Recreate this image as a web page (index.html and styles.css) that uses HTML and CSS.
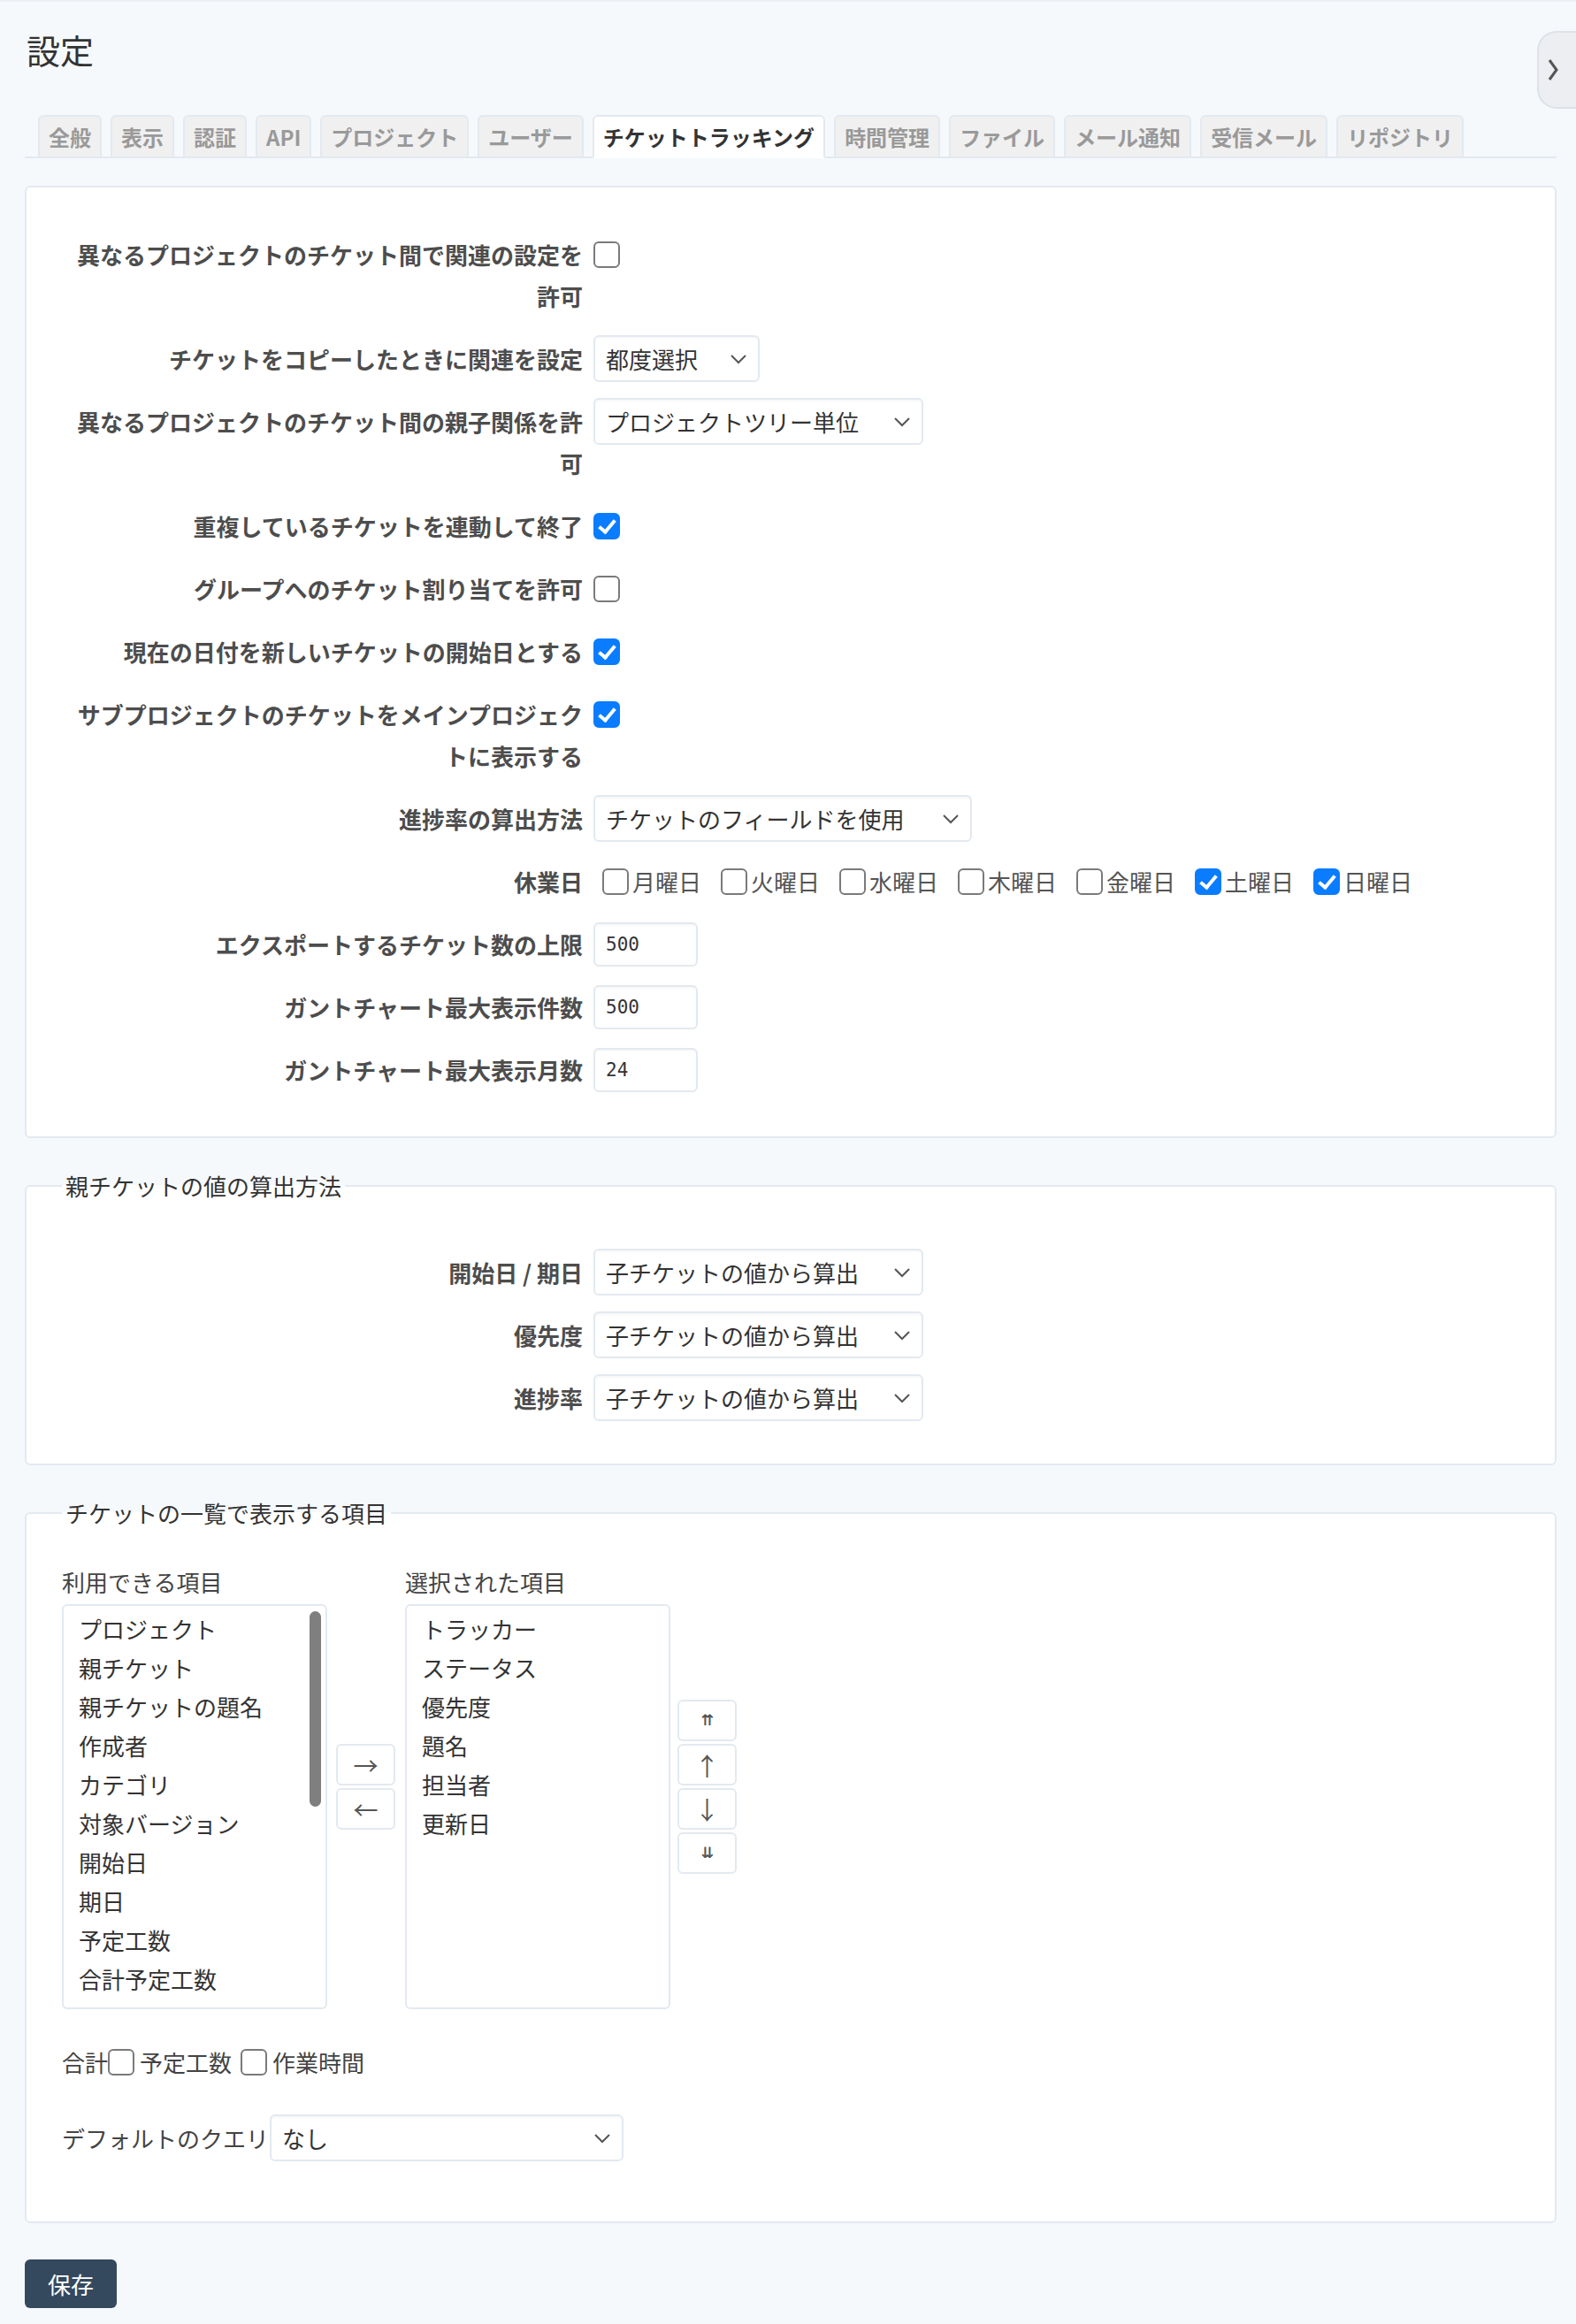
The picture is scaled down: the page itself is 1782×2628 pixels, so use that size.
FILE: index.html
```html
<!DOCTYPE html>
<html lang="ja">
<head>
    <meta charset="UTF-8">
    <meta name="viewport" content="width=device-width, initial-scale=1.0">
    <title>設定</title>
    <link rel="stylesheet" href="styles.css">
</head>
<body>
    <div class="sidebar-toggle">
        <svg width="12" height="26" viewBox="0 0 12 26"><path d="M2 2 L10 13 L2 24" fill="none" stroke="#555" stroke-width="3"/></svg>
    </div>

    <div class="container">
        <h2 class="page-title">設定</h2>

        <div class="tabs">
            <span class="tab">全般</span>
            <span class="tab">表示</span>
            <span class="tab">認証</span>
            <span class="tab">API</span>
            <span class="tab">プロジェクト</span>
            <span class="tab">ユーザー</span>
            <span class="tab active">チケットトラッキング</span>
            <span class="tab">時間管理</span>
            <span class="tab">ファイル</span>
            <span class="tab">メール通知</span>
            <span class="tab">受信メール</span>
            <span class="tab">リポジトリ</span>
        </div>

        <form>
            <div class="box">
                <div class="row">
                    <label class="row-label">異なるプロジェクトのチケット間で関連の設定を許可</label>
                    <input type="checkbox" class="cb in-row">
                </div>
                <div class="row">
                    <label class="row-label">チケットをコピーしたときに関連を設定</label>
                    <div class="select w-copy"><span>都度選択</span><svg width="20" height="12" viewBox="0 0 20 12"><path d="M2 2 L10 10 L18 2" fill="none" stroke="#555" stroke-width="2"/></svg></div>
                </div>
                <div class="row">
                    <label class="row-label">異なるプロジェクトのチケット間の親子関係を許可</label>
                    <div class="select w-tree"><span>プロジェクトツリー単位</span><svg width="20" height="12" viewBox="0 0 20 12"><path d="M2 2 L10 10 L18 2" fill="none" stroke="#555" stroke-width="2"/></svg></div>
                </div>
                <div class="row">
                    <label class="row-label">重複しているチケットを連動して終了</label>
                    <input type="checkbox" class="cb in-row" checked>
                </div>
                <div class="row">
                    <label class="row-label">グループへのチケット割り当てを許可</label>
                    <input type="checkbox" class="cb in-row">
                </div>
                <div class="row">
                    <label class="row-label">現在の日付を新しいチケットの開始日とする</label>
                    <input type="checkbox" class="cb in-row" checked>
                </div>
                <div class="row">
                    <label class="row-label">サブプロジェクトのチケットをメインプロジェクトに表示する</label>
                    <input type="checkbox" class="cb in-row" checked>
                </div>
                <div class="row">
                    <label class="row-label">進捗率の算出方法</label>
                    <div class="select w-progress"><span>チケットのフィールドを使用</span><svg width="20" height="12" viewBox="0 0 20 12"><path d="M2 2 L10 10 L18 2" fill="none" stroke="#555" stroke-width="2"/></svg></div>
                </div>
                <div class="row">
                    <label class="row-label">休業日</label>
                    <div class="days">
                        <label class="day"><input type="checkbox" class="cb">月曜日</label>
                        <label class="day"><input type="checkbox" class="cb">火曜日</label>
                        <label class="day"><input type="checkbox" class="cb">水曜日</label>
                        <label class="day"><input type="checkbox" class="cb">木曜日</label>
                        <label class="day"><input type="checkbox" class="cb">金曜日</label>
                        <label class="day"><input type="checkbox" class="cb" checked>土曜日</label>
                        <label class="day"><input type="checkbox" class="cb" checked>日曜日</label>
                    </div>
                </div>
                <div class="row">
                    <label class="row-label">エクスポートするチケット数の上限</label>
                    <input type="text" class="num" value="500">
                </div>
                <div class="row">
                    <label class="row-label">ガントチャート最大表示件数</label>
                    <input type="text" class="num" value="500">
                </div>
                <div class="row">
                    <label class="row-label">ガントチャート最大表示月数</label>
                    <input type="text" class="num" value="24">
                </div>
            </div>

            <fieldset class="box parent-calc">
                <legend>親チケットの値の算出方法</legend>
                <div class="row">
                    <label class="row-label">開始日 / 期日</label>
                    <div class="select w-child"><span>子チケットの値から算出</span><svg width="20" height="12" viewBox="0 0 20 12"><path d="M2 2 L10 10 L18 2" fill="none" stroke="#555" stroke-width="2"/></svg></div>
                </div>
                <div class="row">
                    <label class="row-label">優先度</label>
                    <div class="select w-child"><span>子チケットの値から算出</span><svg width="20" height="12" viewBox="0 0 20 12"><path d="M2 2 L10 10 L18 2" fill="none" stroke="#555" stroke-width="2"/></svg></div>
                </div>
                <div class="row">
                    <label class="row-label">進捗率</label>
                    <div class="select w-child"><span>子チケットの値から算出</span><svg width="20" height="12" viewBox="0 0 20 12"><path d="M2 2 L10 10 L18 2" fill="none" stroke="#555" stroke-width="2"/></svg></div>
                </div>
            </fieldset>

            <fieldset class="box list-columns">
                <legend>チケットの一覧で表示する項目</legend>
                <div class="picker">
                    <div class="pick-col">
                        <div class="pick-title">利用できる項目</div>
                        <div class="pick-list available">
                            <div>プロジェクト</div>
                            <div>親チケット</div>
                            <div>親チケットの題名</div>
                            <div>作成者</div>
                            <div>カテゴリ</div>
                            <div>対象バージョン</div>
                            <div>開始日</div>
                            <div>期日</div>
                            <div>予定工数</div>
                            <div>合計予定工数</div>
                            <div>作業時間</div>
                            <span class="thumb"></span>
                        </div>
                    </div>
                    <div class="mv-buttons add-remove">
                        <button type="button" class="mv-btn">→</button>
                        <button type="button" class="mv-btn">←</button>
                    </div>
                    <div class="pick-col selected">
                        <div class="pick-title">選択された項目</div>
                        <div class="pick-list">
                            <div>トラッカー</div>
                            <div>ステータス</div>
                            <div>優先度</div>
                            <div>題名</div>
                            <div>担当者</div>
                            <div>更新日</div>
                        </div>
                    </div>
                    <div class="mv-buttons order">
                        <button type="button" class="mv-btn small">⇈</button>
                        <button type="button" class="mv-btn">↑</button>
                        <button type="button" class="mv-btn">↓</button>
                        <button type="button" class="mv-btn small">⇊</button>
                    </div>
                </div>

                <div class="totals">
                    合計<label class="opt"><input type="checkbox" class="cb">予定工数</label><label class="opt"><input type="checkbox" class="cb">作業時間</label>
                </div>

                <div class="query">
                    <label>デフォルトのクエリ</label>
                    <div class="select w-query"><span>なし</span><svg width="20" height="12" viewBox="0 0 20 12"><path d="M2 2 L10 10 L18 2" fill="none" stroke="#555" stroke-width="2"/></svg></div>
                </div>
            </fieldset>

            <button type="submit" class="save">保存</button>
        </form>
    </div>
</body>
</html>
```

FILE: styles.css
```css
body {
    margin: 0;
    border-top: 2px solid #eceff3;
    background-color: #f6f9fc;
    font-family: "Noto Sans CJK JP", "Noto Sans", sans-serif;
    font-size: 26px;
    color: #333;
}

.container {
    padding: 0 22px 14px 28px;
}

.page-title {
    margin: 0;
    padding: 31px 0 0 2px;
    font-size: 38px;
    font-weight: normal;
    line-height: 46px;
}

/* collapse button on the right edge */
.sidebar-toggle {
    position: absolute;
    top: 35px;
    right: 0;
    width: 44px;
    height: 88px;
    box-sizing: border-box;
    display: flex;
    align-items: center;
    padding-left: 10px;
    background-color: #eceef1;
    border: 2px solid #dde2e8;
    border-right: none;
    border-radius: 22px 0 0 22px;
}

/* tabs */
.tabs {
    display: flex;
    gap: 10px;
    margin-top: 51px;
    padding-left: 15px;
    border-bottom: 2px solid #e3e9f0;
}

.tab {
    box-sizing: border-box;
    height: 49px;
    margin-bottom: -2px;
    padding: 0 10px;
    border: 2px solid #e3e9f0;
    border-radius: 6px 6px 0 0;
    background-color: #f0f0f0;
    color: #999;
    font-size: 24px;
    font-weight: bold;
    line-height: 45px;
    white-space: nowrap;
}

.tab.active {
    background-color: #fff;
    border-bottom-color: #fff;
    color: #333;
}

/* boxes */
.box {
    margin: 31px 0 0;
    padding: 40px 0;
    border: 2px solid #e3e9f0;
    border-radius: 6px;
    background-color: #fff;
}

fieldset.box {
    min-width: 0;
    margin-top: 38px;
}

fieldset.box legend {
    margin-left: 40px;
    padding: 0 4px;
    line-height: 31px;
    color: #333;
}

.parent-calc {
    padding: 47px 0 39px;
}

.list-columns {
    padding: 43px 40px 68px;
}

fieldset.list-columns legend {
    margin-left: 0;
}

/* tabular rows */
.row {
    display: flex;
    align-items: flex-start;
    padding: 9px 0;
}

.row-label {
    box-sizing: border-box;
    flex: none;
    width: 629px;
    margin-right: 12px;
    padding: 3px 0 3px 55px;
    text-align: right;
    font-weight: bold;
    line-height: 47px;
    color: #4d4d4d;
}

/* checkboxes */
.cb {
    appearance: none;
    -webkit-appearance: none;
    position: relative;
    flex: none;
    width: 30px;
    height: 30px;
    margin: 0;
    box-sizing: border-box;
    border: 2px solid #7a7a7a;
    border-radius: 6px;
    background-color: #fff;
}

.cb:checked {
    background-color: #0a7cff;
    border-color: #0a7cff;
}

.cb:checked::after {
    content: "";
    position: absolute;
    left: 8px;
    top: 2px;
    width: 7px;
    height: 15px;
    border-right: 4px solid #fff;
    border-bottom: 4px solid #fff;
    transform: rotate(40deg);
}

.cb.in-row {
    margin-top: 12px;
}

.days {
    display: flex;
    align-items: center;
    height: 53px;
    color: #555;
}

.day {
    display: flex;
    align-items: center;
    margin-right: 12px;
}

.day .cb {
    margin: 0 4px 0 10px;
}

/* selects */
.select {
    box-sizing: border-box;
    display: flex;
    align-items: center;
    height: 53px;
    padding: 0 12px 0 12px;
    border: 2px solid #e3e9f0;
    border-radius: 6px;
    background-color: #fff;
    box-shadow: inset 0 2px 2px rgba(0, 0, 0, 0.03);
    color: #333;
    white-space: nowrap;
}

.select svg {
    flex: none;
    margin-left: auto;
}

.w-copy { width: 188px; }
.w-tree { width: 373px; }
.w-progress { width: 428px; }
.w-child { width: 373px; }
.w-query { width: 400px; }

.num {
    box-sizing: border-box;
    width: 118px;
    height: 50px;
    margin: 2px 0 0;
    padding: 0 12px;
    border: 2px solid #e3e9f0;
    border-radius: 6px;
    box-shadow: inset 0 2px 2px rgba(0, 0, 0, 0.03);
    font-family: "DejaVu Sans Mono", "Liberation Mono", monospace;
    font-size: 21px;
    color: #333;
}

/* column picker */
.picker {
    display: flex;
    align-items: center;
}

.pick-col {
    width: 300px;
}

.pick-title {
    margin-bottom: 5px;
    line-height: 40px;
    color: #444;
}

.pick-list {
    position: relative;
    box-sizing: border-box;
    height: 458px;
    padding: 4px 0;
    border: 2px solid #e3e9f0;
    border-radius: 6px;
    background-color: #fff;
    overflow: hidden;
    line-height: 44px;
    white-space: nowrap;
}

.pick-list div {
    padding: 0 17px;
}

/* scrollbar thumb of the available list */
.thumb {
    position: absolute;
    top: 6px;
    right: 5px;
    width: 13px;
    height: 221px;
    border-radius: 7px;
    background-color: #7f7f7f;
}

.mv-buttons {
    display: flex;
    flex-direction: column;
    gap: 3px;
}

.add-remove {
    margin: 0 11px 0 10px;
}

.order {
    margin-left: 8px;
}

.mv-btn {
    box-sizing: border-box;
    width: 67px;
    height: 47px;
    padding: 0;
    border: 2px solid #e3e9f0;
    border-radius: 6px;
    background-color: #fff;
    color: #555;
    font-family: "Noto Sans CJK JP", sans-serif;
    font-size: 28px;
    line-height: 1;
}

.mv-btn.small {
    font-family: "DejaVu Sans", sans-serif;
    font-size: 17px;
    font-weight: bold;
}

.totals {
    display: flex;
    align-items: center;
    margin-top: 36px;
    line-height: 47px;
    color: #444;
}

.opt {
    display: flex;
    align-items: center;
    margin-right: 10px;
}

.opt .cb {
    margin-right: 6px;
}

.query {
    display: flex;
    align-items: center;
    margin-top: 36px;
    color: #444;
}

.query label {
    margin-right: 1px;
}

.save {
    display: block;
    height: 55px;
    margin-top: 41px;
    padding: 0 26px;
    border: none;
    border-radius: 6px;
    background-color: #34495e;
    color: #fff;
    font-family: "Noto Sans CJK JP", sans-serif;
    font-size: 26px;
}
```
